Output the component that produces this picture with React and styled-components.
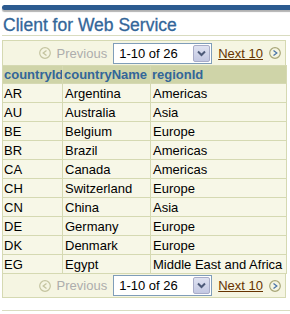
import React from "react";
import styled, { createGlobalStyle } from "styled-components";

const Global = createGlobalStyle`
  html, body { margin: 0; padding: 0; background: #ffffff; overflow: hidden; }
  body { font-family: "Liberation Sans", Arial, sans-serif; }
`;

const Page = styled.div`
  padding: 5px 0 0 2px;
  width: 288px;
`;

const BrandBar = styled.div`
  height: 5px;
  background: #2c5b90;
  border-radius: 3px 0 0 3px;
  box-shadow: 0 2px 1px rgba(0, 0, 0, 0.3);
  margin-right: -4px;
`;

const Title = styled.h1`
  margin: 5px 0 0 0;
  padding: 0 0 0 1px;
  font-size: 17.5px;
  line-height: 20px;
  font-weight: normal;
  color: #336699;
  -webkit-text-stroke: 0.3px #336699;
  border-bottom: 1px solid #d9dcc0;
  margin-right: -4px;
`;

const Nav = styled.div`
  box-sizing: border-box;
  width: 284px;
  height: ${(p) => (p.$bottom ? "24px" : "25px")};
  margin-top: ${(p) => (p.$bottom ? "0" : "4px")};
  display: flex;
  align-items: center;
  justify-content: flex-end;
  gap: 6px;
  padding-right: 4px;
  background: #f5f5e2;
  border: 1px solid #d5d9b2;
  ${(p) => (p.$bottom ? "border-top: none;" : "border-bottom: none;")}
  font-size: 13px;
`;

const Disabled = styled.span`
  color: #adadad;
`;

const NextLink = styled.a`
  color: #663300;
  text-decoration: underline;
  cursor: pointer;
`;

const Select = styled.div`
  box-sizing: border-box;
  width: 99px;
  height: 21px;
  background: #ffffff;
  border: 1px solid #7f9db9;
  display: flex;
  align-items: center;
  justify-content: space-between;
  padding: 0 1px 0 5px;
  font-size: 13px;
  color: #000;
`;

const DropButton = styled.span`
  box-sizing: border-box;
  width: 17px;
  height: 17px;
  border: 1px solid #a8acc8;
  border-radius: 2px;
  background: linear-gradient(#dfe2f1, #c3c8e2);
  display: flex;
  align-items: center;
  justify-content: center;
`;

const Table = styled.table`
  width: 284px;
  border-collapse: collapse;
  table-layout: fixed;
  font-size: 13px;
`;

const Th = styled.th`
  height: 17px;
  padding: 0 1px;
  background: #cfd4a8;
  color: #336699;
  font-weight: bold;
  text-align: left;
  border: 1px solid #d5d9b2;
  white-space: nowrap;
  overflow: hidden;
  line-height: 17px;
`;

const Td = styled.td`
  height: 17px;
  padding: 1px 2px 0 ${(p) => (p.$first ? "1px" : "2px")};
  background: #f7f7e7;
  color: #000;
  border: 1px solid #d5d9b2;
  white-space: nowrap;
  overflow: hidden;
  line-height: 17px;
`;

const Rule = styled.div`
  margin-top: 12px;
  border-top: 1px solid #d9dcc0;
  margin-right: -4px;
`;

const PrevIcon = () => (
  <svg width="12" height="12" viewBox="0 0 12 12">
    <circle cx="6" cy="6" r="5.3" fill="#f5f5e2" stroke="#c4c4a0" strokeWidth="1.2" />
    <path d="M7.5 3.5 L4.2 6 L7.5 8.5" fill="none" stroke="#c4c4a0" strokeWidth="1.3" />
  </svg>
);

const NextIcon = () => (
  <svg width="12" height="12" viewBox="0 0 12 12">
    <circle cx="6" cy="6" r="5.3" fill="#f5f5e2" stroke="#a8a678" strokeWidth="1.2" />
    <path d="M4.5 3.5 L7.8 6 L4.5 8.5" fill="none" stroke="#4a74a8" strokeWidth="1.3" />
  </svg>
);

const Chevron = () => (
  <svg width="9" height="7" viewBox="0 0 9 7">
    <path d="M1 1.5 L4.5 5 L8 1.5" fill="none" stroke="#4d5a78" strokeWidth="2" />
  </svg>
);

const Navigator = ({ bottom }) => (
  <Nav $bottom={bottom}>
    <PrevIcon />
    <Disabled>Previous</Disabled>
    <Select role="combobox">
      <span>1-10 of 26</span>
      <DropButton>
        <Chevron />
      </DropButton>
    </Select>
    <NextLink>Next 10</NextLink>
    <NextIcon />
  </Nav>
);

const rows = [
  ["AR", "Argentina", "Americas"],
  ["AU", "Australia", "Asia"],
  ["BE", "Belgium", "Europe"],
  ["BR", "Brazil", "Americas"],
  ["CA", "Canada", "Americas"],
  ["CH", "Switzerland", "Europe"],
  ["CN", "China", "Asia"],
  ["DE", "Germany", "Europe"],
  ["DK", "Denmark", "Europe"],
  ["EG", "Egypt", "Middle East and Africa"],
];

export default function App() {
  return (
    <Page>
      <Global />
      <BrandBar />
      <Title>Client for Web Service</Title>
      <Navigator />
      <Table>
        <colgroup>
          <col style={{ width: "60px" }} />
          <col style={{ width: "88px" }} />
          <col style={{ width: "136px" }} />
        </colgroup>
        <thead>
          <tr>
            <Th>countryId</Th>
            <Th>countryName</Th>
            <Th>regionId</Th>
          </tr>
        </thead>
        <tbody>
          {rows.map((r) => (
            <tr key={r[0]}>
              <Td $first>{r[0]}</Td>
              <Td>{r[1]}</Td>
              <Td>{r[2]}</Td>
            </tr>
          ))}
        </tbody>
      </Table>
      <Navigator bottom />
      <Rule />
    </Page>
  );
}
